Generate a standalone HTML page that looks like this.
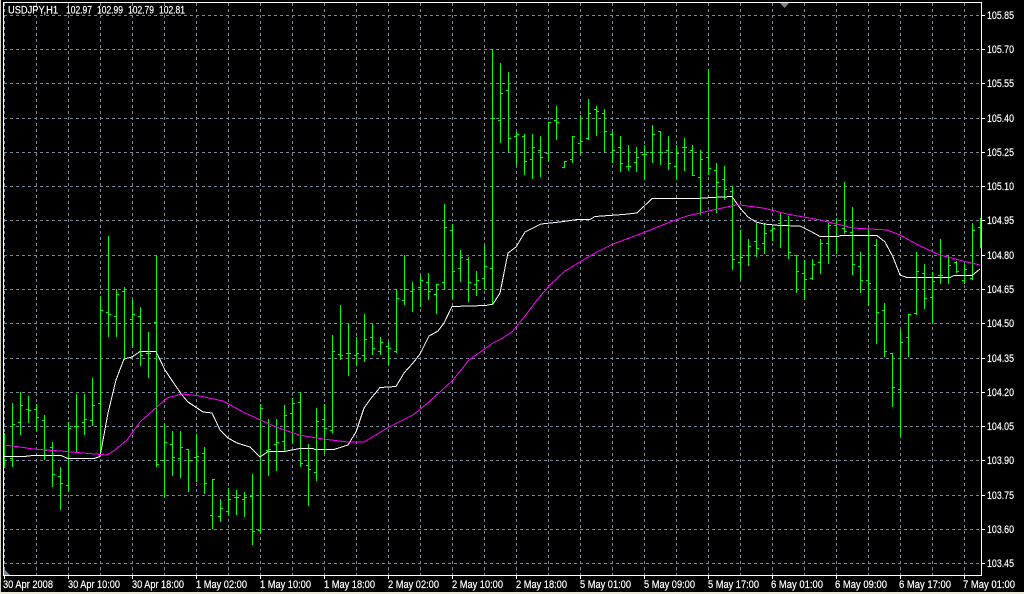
<!DOCTYPE html>
<html><head><meta charset="utf-8"><title>USDJPY,H1</title>
<style>
html,body{margin:0;padding:0;background:#000;width:1024px;height:594px;overflow:hidden}
svg{display:block}
text{font-family:"Liberation Sans",sans-serif;font-size:11px;fill:#fff;stroke:#fff;stroke-width:.2px}
</style></head><body>
<svg width="1024" height="594" viewBox="0 0 1024 594" xmlns="http://www.w3.org/2000/svg">
<rect width="1024" height="594" fill="#000"/>
<rect x="0" y="592" width="1024" height="2" fill="#ece9d8"/>
<rect x="0" y="0" width="1" height="592" fill="#d4d0c8"/>
<g shape-rendering="crispEdges" fill="none">
<path stroke="#778899" stroke-dasharray="3 3" d="M4 15.5H981M4 49.5H981M4 83.5H981M4 118.5H981M4 152.5H981M4 186.5H981M4 220.5H981M4 255.5H981M4 289.5H981M4 323.5H981M4 358.5H981M4 392.5H981M4 426.5H981M4 460.5H981M4 495.5H981M4 529.5H981M4 563.5H981"/>
<path stroke="#778899" stroke-dasharray="3 3" d="M4.5 3V575M36.5 3V575M68.5 3V575M100.5 3V575M132.5 3V575M164.5 3V575M196.5 3V575M228.5 3V575M260.5 3V575M292.5 3V575M324.5 3V575M356.5 3V575M388.5 3V575M420.5 3V575M452.5 3V575M484.5 3V575M516.5 3V575M548.5 3V575M580.5 3V575M612.5 3V575M644.5 3V575M676.5 3V575M708.5 3V575M740.5 3V575M772.5 3V575M804.5 3V575M836.5 3V575M868.5 3V575M900.5 3V575M932.5 3V575M964.5 3V575"/>
<path stroke="#00ff00" d="M4.5 433V468
M12.5 403V467M10 458.5h2M13 424.5h2
M20.5 392V435M18 422.5h2M21 405.5h2
M28.5 396V423M26 409.5h2M29 410.5h2
M36.5 404V431M34 409.5h2M37 417.5h2
M44.5 415V460M42 420.5h2M45 450.5h2
M52.5 442V487M50 447.5h2M53 474.5h2
M60.5 467V510M58 476.5h2M61 483.5h2
M68.5 422V492M66 485.5h2M69 428.5h2
M76.5 394V453M74 426.5h2M77 426.5h2
M84.5 394V435M82 422.5h2M85 419.5h2
M92.5 378V426M90 420.5h2M93 405.5h2
M100.5 296V456M98 403.5h2M101 310.5h2
M108.5 236V337M106 312.5h2M109 314.5h2
M116.5 289V337M114 316.5h2M117 294.5h2
M124.5 287V360M122 291.5h2M125 323.5h2
M132.5 300V348M130 319.5h2M133 314.5h2
M140.5 307V366M138 316.5h2M141 355.5h2
M148.5 332V378M146 353.5h2M149 353.5h2
M156.5 255V467M154 322.5h2M157 464.5h2
M164.5 423V497M162 460.5h2M165 442.5h2
M172.5 431V476M170 444.5h2M173 457.5h2
M180.5 431V478M178 458.5h2M181 447.5h2
M188.5 449V492M186 449.5h2M189 460.5h2
M196.5 434V482M194 457.5h2M197 456.5h2
M204.5 447V494M202 453.5h2M205 483.5h2
M212.5 479V529M210 515.5h2M213 479.5h2
M220.5 499V522M218 516.5h2M221 508.5h2
M228.5 488V515M226 511.5h2M229 499.5h2
M236.5 490V515M234 497.5h2M237 497.5h2
M244.5 492V517M242 499.5h2M245 497.5h2
M252.5 474V545M250 496.5h2M253 531.5h2
M260.5 404V533M258 530.5h2M261 408.5h2
M268.5 419V476M266 450.5h2M269 449.5h2
M276.5 419V471M274 444.5h2M277 442.5h2
M284.5 405V451M282 441.5h2M285 415.5h2
M292.5 398V443M290 413.5h2M293 403.5h2
M300.5 392V467M298 402.5h2M301 463.5h2
M308.5 444V506M306 465.5h2M309 469.5h2
M316.5 408V481M314 472.5h2M317 421.5h2
M324.5 404V454M322 419.5h2M325 428.5h2
M332.5 335V433M330 430.5h2M333 351.5h2
M340.5 305V360M338 354.5h2M341 355.5h2
M348.5 323V376M346 353.5h2M349 353.5h2
M356.5 337V366M354 355.5h2M357 353.5h2
M364.5 314V362M362 355.5h2M365 339.5h2
M372.5 323V355M370 337.5h2M373 348.5h2
M380.5 337V355M378 351.5h2M381 342.5h2
M388.5 342V365M386 346.5h2M389 348.5h2
M396.5 289V353M394 351.5h2M397 298.5h2
M404.5 255V305M402 300.5h2M405 289.5h2
M412.5 282V312M410 291.5h2M413 289.5h2
M420.5 275V307M418 287.5h2M421 280.5h2
M428.5 273V300M426 282.5h2M429 291.5h2
M436.5 284V314M434 294.5h2M437 284.5h2
M444.5 204V290M442 282.5h2M445 227.5h2
M452.5 224V299M450 230.5h2M453 271.5h2
M460.5 250V282M458 268.5h2M461 257.5h2
M468.5 257V302M466 259.5h2M469 282.5h2
M476.5 271V296M474 284.5h2M477 280.5h2
M484.5 246V289M482 278.5h2M485 266.5h2
M492.5 49V305M490 268.5h2M493 118.5h2
M500.5 63V143M498 120.5h2M501 93.5h2
M508.5 72V152M506 90.5h2M509 138.5h2
M516.5 132V165M514 136.5h2M517 134.5h2
M524.5 134V175M522 136.5h2M525 161.5h2
M532.5 134V179M530 159.5h2M533 147.5h2
M540.5 136V177M538 150.5h2M541 157.5h2
M548.5 122V161M546 153.5h2M549 122.5h2
M556.5 106V140M554 120.5h2M557 122.5h2
M564.5 161V168M562 167.5h2M565 161.5h2
M572.5 136V163M570 159.5h2M573 136.5h2
M580.5 115V154M578 143.5h2M581 141.5h2
M588.5 99V140M586 138.5h2M589 113.5h2
M596.5 106V136M594 109.5h2M597 111.5h2
M604.5 109V152M602 113.5h2M605 131.5h2
M612.5 132V163M610 134.5h2M613 150.5h2
M620.5 136V172M618 147.5h2M621 163.5h2
M628.5 145V171M626 166.5h2M629 166.5h2
M636.5 147V172M634 162.5h2M637 157.5h2
M644.5 145V179M642 154.5h2M645 154.5h2
M652.5 125V163M650 152.5h2M653 134.5h2
M660.5 131V165M658 131.5h2M661 152.5h2
M668.5 136V170M666 150.5h2M669 163.5h2
M676.5 145V179M674 166.5h2M677 153.5h2
M684.5 138V171M682 147.5h2M685 147.5h2
M692.5 145V176M690 150.5h2M693 175.5h2
M700.5 150V215M698 177.5h2M701 159.5h2
M708.5 69V175M706 157.5h2M709 168.5h2
M716.5 163V213M714 170.5h2M717 182.5h2
M724.5 166V200M722 179.5h2M725 189.5h2
M732.5 186V270M730 191.5h2M733 259.5h2
M740.5 230V279M738 262.5h2M741 257.5h2
M748.5 239V266M746 255.5h2M749 246.5h2
M756.5 223V257M754 241.5h2M757 248.5h2
M764.5 223V254M762 243.5h2M765 233.5h2
M772.5 226V241M770 230.5h2M773 228.5h2
M780.5 212V248M778 223.5h2M781 225.5h2
M788.5 216V259M786 225.5h2M789 252.5h2
M796.5 255V293M794 255.5h2M797 271.5h2
M804.5 260V300M802 273.5h2M805 279.5h2
M812.5 259V280M810 278.5h2M813 264.5h2
M820.5 239V274M818 262.5h2M821 243.5h2
M828.5 223V264M826 243.5h2M829 225.5h2
M836.5 218V254M834 225.5h2M837 236.5h2
M844.5 182V234M842 228.5h2M845 231.5h2
M852.5 207V275M850 232.5h2M853 264.5h2
M860.5 252V293M858 266.5h2M861 280.5h2
M868.5 228V306M866 280.5h2M869 283.5h2
M876.5 239V344M874 245.5h2M877 312.5h2
M884.5 303V357M882 310.5h2M885 351.5h2
M892.5 353V407M890 353.5h2M893 387.5h2
M900.5 330V437M898 389.5h2M901 342.5h2
M908.5 314V357M906 337.5h2M909 314.5h2
M916.5 252V315M914 313.5h2M917 271.5h2
M924.5 264V309M922 273.5h2M925 298.5h2
M932.5 272V324M930 297.5h2M933 281.5h2
M940.5 239V284M938 275.5h2M941 275.5h2
M948.5 256V284M946 277.5h2M949 265.5h2
M956.5 261V273M954 262.5h2M957 271.5h2
M964.5 264V284M962 280.5h2M965 269.5h2
M972.5 223V280M970 278.5h2M973 230.5h2
M980.5 218V248M978 227.5h2"/>
<polyline fill="none" stroke="#fff" stroke-width="1" points="4,456.5 24,456.5 33,455.5 61,455.5 68,458.5 94,458.5 100,456.5 108,413 116,380 124,359 132,357 140,351.5 156,351.5 165,370 173,382 182,395 188,402 203,412 212,413 220,430 228,438 237,443 250,447 256,453 260,457 268,451.5 284,451.5 300,448.5 313,448.5 315,449.5 334,449.5 348,445 356,432 364,408 372,397 380,387.5 396,386.5 404,373 413,363 420,354 429,336 438,331 444,323 452,306.5 486,305.5 493,304 500,293 504,273 508,253 516,247 525,232 533,228 541,224 560,222 577,219.5 590,219.5 595,216.5 623,214.5 637,213 652,198.5 697,198.5 712,197.5 732,196.5 740,208 748,217 756,222 764,224 780,225.5 800,226 812,232 820,236.5 838,236.5 841,235.5 877,235.5 885,242 893,257 900,275 907,277.5 950,277.5 954,275.5 972,275.5 980,269"/>
<polyline fill="none" stroke="#ff00ff" stroke-width="1" points="4,445 20,447 33,449 60,451 83,453 107,455 115,450 127,440 140,422 157,407 167,398 182,394 200,396 223,401 243,412 256,418 276,427 299,435 323,439 348,442 364,442 389,427 413,415 429,402 453,380 469,360 493,343 501,339 512,332 525,316 537,300 550,285 565,271 585,259 595,253 613,244 643,233 670,222 687,216 713,210 736,205 740,205 763,208 787,214 820,220 853,228 887,230 900,235 920,246 940,255 963,261 980,265"/>
<rect x="3" y="2" width="979" height="1" fill="#fff"/>
<rect x="3" y="2" width="1" height="574" fill="#fff"/>
<rect x="981" y="2" width="1" height="574" fill="#fff"/>
<rect x="3" y="575" width="979" height="1" fill="#fff"/>
<path stroke="#fff" fill="none" d="M982 15.5h3M982 49.5h3M982 83.5h3M982 118.5h3M982 152.5h3M982 186.5h3M982 220.5h3M982 255.5h3M982 289.5h3M982 323.5h3M982 358.5h3M982 392.5h3M982 426.5h3M982 460.5h3M982 495.5h3M982 529.5h3M982 563.5h3"/>
<path stroke="#fff" fill="none" d="M4.5 576v3M68.5 576v3M132.5 576v3M196.5 576v3M260.5 576v3M324.5 576v3M388.5 576v3M452.5 576v3M516.5 576v3M580.5 576v3M644.5 576v3M708.5 576v3M772.5 576v3M836.5 576v3M900.5 576v3M964.5 576v3"/>
</g>
<polygon points="780,3 789,3 784.5,8" fill="#778899"/>
<polygon points="4,569 4,575 10,575" fill="#778899"/>
<text x="8" y="13.5" textLength="50" lengthAdjust="spacingAndGlyphs">USDJPY,H1</text>
<text x="66" y="13.5" textLength="26" lengthAdjust="spacingAndGlyphs">102.97</text>
<text x="97" y="13.5" textLength="26" lengthAdjust="spacingAndGlyphs">102.99</text>
<text x="128" y="13.5" textLength="26" lengthAdjust="spacingAndGlyphs">102.79</text>
<text x="159" y="13.5" textLength="26" lengthAdjust="spacingAndGlyphs">102.81</text>
<g>
<text x="987" y="19" textLength="27" lengthAdjust="spacingAndGlyphs">105.85</text>
<text x="987" y="53" textLength="27" lengthAdjust="spacingAndGlyphs">105.70</text>
<text x="987" y="87" textLength="27" lengthAdjust="spacingAndGlyphs">105.55</text>
<text x="987" y="122" textLength="27" lengthAdjust="spacingAndGlyphs">105.40</text>
<text x="987" y="156" textLength="27" lengthAdjust="spacingAndGlyphs">105.25</text>
<text x="987" y="190" textLength="27" lengthAdjust="spacingAndGlyphs">105.10</text>
<text x="987" y="224" textLength="27" lengthAdjust="spacingAndGlyphs">104.95</text>
<text x="987" y="259" textLength="27" lengthAdjust="spacingAndGlyphs">104.80</text>
<text x="987" y="293" textLength="27" lengthAdjust="spacingAndGlyphs">104.65</text>
<text x="987" y="327" textLength="27" lengthAdjust="spacingAndGlyphs">104.50</text>
<text x="987" y="362" textLength="27" lengthAdjust="spacingAndGlyphs">104.35</text>
<text x="987" y="396" textLength="27" lengthAdjust="spacingAndGlyphs">104.20</text>
<text x="987" y="430" textLength="27" lengthAdjust="spacingAndGlyphs">104.05</text>
<text x="987" y="464" textLength="27" lengthAdjust="spacingAndGlyphs">103.90</text>
<text x="987" y="499" textLength="27" lengthAdjust="spacingAndGlyphs">103.75</text>
<text x="987" y="533" textLength="27" lengthAdjust="spacingAndGlyphs">103.60</text>
<text x="987" y="567" textLength="27" lengthAdjust="spacingAndGlyphs">103.45</text>
</g>
<g>
<text x="3" y="588" textLength="50" lengthAdjust="spacingAndGlyphs">30 Apr 2008</text>
<text x="68" y="588" textLength="52" lengthAdjust="spacingAndGlyphs">30 Apr 10:00</text>
<text x="132" y="588" textLength="52" lengthAdjust="spacingAndGlyphs">30 Apr 18:00</text>
<text x="196" y="588" textLength="51" lengthAdjust="spacingAndGlyphs">1 May 02:00</text>
<text x="260" y="588" textLength="51" lengthAdjust="spacingAndGlyphs">1 May 10:00</text>
<text x="324" y="588" textLength="51" lengthAdjust="spacingAndGlyphs">1 May 18:00</text>
<text x="388" y="588" textLength="51" lengthAdjust="spacingAndGlyphs">2 May 02:00</text>
<text x="452" y="588" textLength="51" lengthAdjust="spacingAndGlyphs">2 May 10:00</text>
<text x="516" y="588" textLength="51" lengthAdjust="spacingAndGlyphs">2 May 18:00</text>
<text x="580" y="588" textLength="51" lengthAdjust="spacingAndGlyphs">5 May 01:00</text>
<text x="644" y="588" textLength="51" lengthAdjust="spacingAndGlyphs">5 May 09:00</text>
<text x="708" y="588" textLength="51" lengthAdjust="spacingAndGlyphs">5 May 17:00</text>
<text x="771" y="588" textLength="52" lengthAdjust="spacingAndGlyphs">6 May 01:00</text>
<text x="835" y="588" textLength="52" lengthAdjust="spacingAndGlyphs">6 May 09:00</text>
<text x="899" y="588" textLength="52" lengthAdjust="spacingAndGlyphs">6 May 17:00</text>
<text x="963" y="588" textLength="52" lengthAdjust="spacingAndGlyphs">7 May 01:00</text>
</g>
</svg>
</body></html>
